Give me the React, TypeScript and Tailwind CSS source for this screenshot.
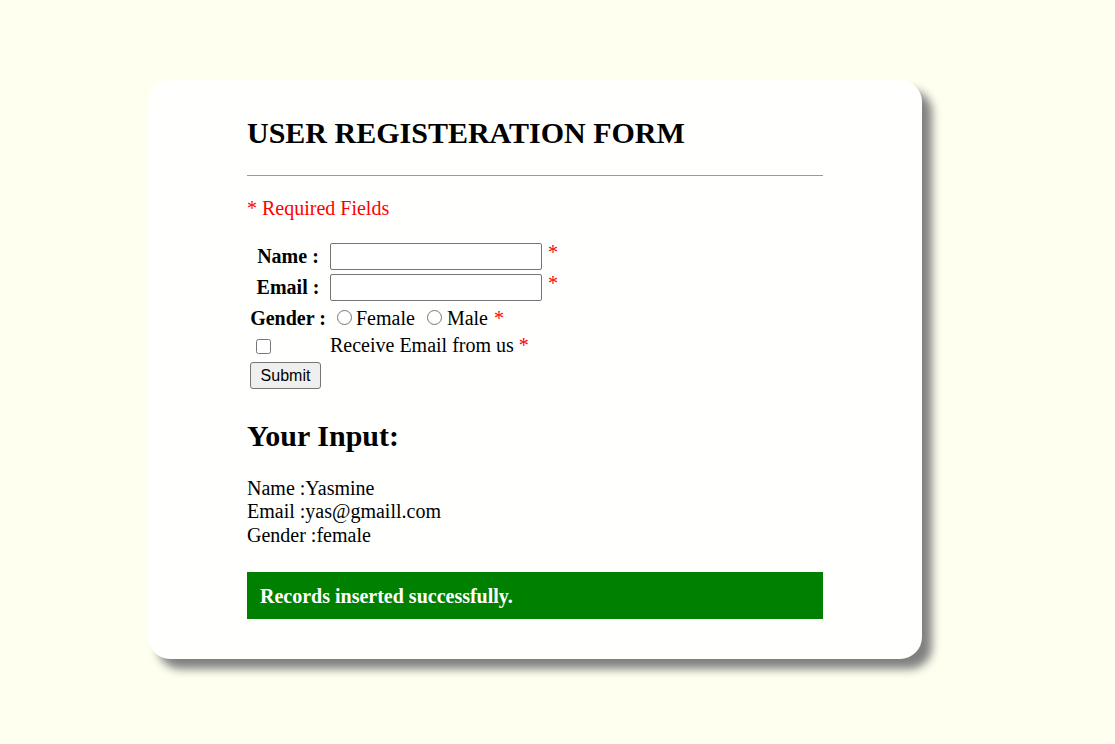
export default function App() {
  return (
    <div className="min-h-screen w-full bg-[#fffff0] pt-[80px] pb-[85px] font-['Liberation_Serif','Times_New_Roman',serif] text-black">
      <div className="ml-[148px] w-[774px] rounded-[22px] bg-[#fffffe] pl-[99px] pr-[99px] pt-[36px] pb-[40px] shadow-[10px_10px_10px_#808080]">
        <h1 className="text-[30px] leading-[34px] font-bold">USER REGISTERATION FORM</h1>
        <hr className="mt-[25px] border-0 border-t border-[#9a9a9a]" />
        <p className="mt-[21px] text-[20px] leading-[23.5px] text-[#ff0000]">* Required Fields</p>

        <form className="mt-[20px] pl-[2px] text-[20px] leading-[23.5px]" onSubmit={e => e.preventDefault()}>
          <div className="flex h-[31px] items-center">
            <label className="w-[78px] pt-[2px] text-center font-bold">Name :</label>
            <input type="text" className="ml-[3px] h-[27px] w-[212px] rounded-[2px] border border-[#767676] bg-white" aria-label="Name" />
            <span className="ml-[6px] mb-[6px] text-[#ff0000]">*</span>
          </div>
          <div className="flex h-[31px] items-center">
            <label className="w-[78px] pt-[2px] text-center font-bold">Email :</label>
            <input type="text" className="ml-[3px] h-[27px] w-[212px] rounded-[2px] border border-[#767676] bg-white" aria-label="Email" />
            <span className="ml-[6px] mb-[6px] text-[#ff0000]">*</span>
          </div>
          <div className="flex h-[30px] items-center pt-[2px]">
            <label className="w-[78px] text-center font-bold whitespace-nowrap">Gender :</label>
            <input type="radio" name="gender" className="ml-[10px] mb-[3px] h-[15px] w-[15px]" aria-label="Female" />
            <span className="ml-[4px]">Female</span>
            <input type="radio" name="gender" className="ml-[12px] mb-[3px] h-[15px] w-[15px]" aria-label="Male" />
            <span className="ml-[5px]">Male</span>
            <span className="ml-[6px] text-[#ff0000]">*</span>
          </div>
          <div className="flex h-[26px] items-center pt-[1px]">
            <div className="w-[78px]">
              <input type="checkbox" className="ml-[7px] mt-[1px] block h-[15px] w-[15px]" aria-label="Receive Email from us" />
            </div>
            <span className="ml-[3px]">Receive Email from us <span className="text-[#ff0000]">*</span></span>
          </div>
          <div className="flex h-[34px] items-center">
            <button type="submit" className="ml-[1px] h-[27px] w-[71px] rounded-[3px] border border-[#767676] bg-[#efefef] font-['Liberation_Sans',Arial,sans-serif] text-[16px] leading-[18px] text-black">
              Submit
            </button>
          </div>
        </form>

        <h2 className="mt-[26px] text-[30px] leading-[33px] font-bold">Your Input:</h2>
        <div className="mt-[25px] text-[20px] leading-[23.5px]">
          <div>Name :Yasmine</div>
          <div>Email :yas@gmaill.com</div>
          <div>Gender :female</div>
        </div>

        <div className="mt-[25px] flex h-[47px] items-center bg-[#008000] pl-[13px] pt-[2px] text-[20px] leading-[23px] font-bold text-white">
          Records inserted successfully.
        </div>
      </div>
    </div>
  )
}
